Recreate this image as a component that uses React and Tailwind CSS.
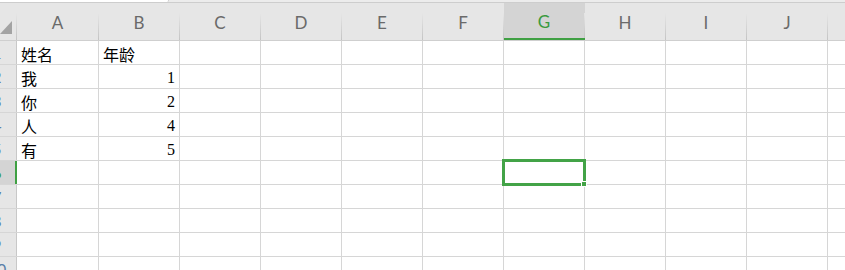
import React from "react";

const COLS = ["A", "B", "C", "D", "E", "F", "G", "H", "I", "J"];
const ROWS = [
  { name: "姓名", age: "年龄", header: true },
  { name: "我", age: "1" },
  { name: "你", age: "2" },
  { name: "人", age: "4" },
  { name: "有", age: "5" },
  {},
  {},
  {},
  {},
  {},
];
const SELECTED_COL = "G";
const SELECTED_ROW = 6;

function ColHeader({ label, first }) {
  const selected = label === SELECTED_COL;
  return (
    <div
      className={`flex h-full ${first ? "w-[82px]" : "w-[81px]"} ${selected ? "bg-[#d4d4d4] border-b-2 border-[#3fa043]" : ""}`}
    >
      <div
        className={`flex flex-1 items-center justify-center pt-[2px] text-[17px] ${selected ? "text-[#3a9a3e]" : "text-[#6a6a6a]"}`}
      >
        {label}
      </div>
      <div className="mt-[10px] w-px self-stretch bg-gradient-to-b from-[#e6e6e6] to-[#c4c4c4]" />
    </div>
  );
}

function RowHeader({ n }) {
  const selected = n === SELECTED_ROW;
  return (
    <div
      className={`h-full w-[17px] shrink-0 overflow-hidden ${selected ? "bg-[#d4d4d4] border-r-2 border-[#3fa043]" : "bg-[#e6e6e6] border-r border-[#c8c8c8]"}`}
    >
      <div
        className={`-ml-[23px] flex h-full w-[40px] items-center justify-center text-[16px] ${selected ? "text-[#3a9a3e]" : "text-[#5a7fa8]"}`}
      >
        {n}
      </div>
    </div>
  );
}

function CornerCell() {
  return (
    <div className="flex h-[37px] w-[17px] shrink-0 items-end">
      <svg width="12" height="13" viewBox="0 0 12 13" className="mb-[6px] shrink-0">
        <path d="M12 0 L12 13 L0 13 Z" fill="#a3a3a3" />
      </svg>
      <div className="ml-auto h-[27px] w-px bg-gradient-to-b from-[#e6e6e6] to-[#c4c4c4]" />
    </div>
  );
}

export default function App() {
  return (
    <div className="relative h-[270px] w-[845px] overflow-hidden bg-white font-['Lato','Noto_Sans_CJK_SC',sans-serif]">
      {/* top strip */}
      <div className="flex h-[3px] border-b border-[#cdcdcd] bg-[#ececec]">
        <div className="h-[2px] w-[169px] rounded-br-[4px] border-r border-[#cdcdcd] bg-white" />
      </div>

      {/* column headers */}
      <div className="flex h-[38px] border-b border-[#cfcfcf] bg-[#e6e6e6]">
        <CornerCell />
        {COLS.map((c, i) => (
          <ColHeader key={c} label={c} first={i === 0} />
        ))}
        <div className="flex-1" />
      </div>

      {/* rows */}
      {ROWS.map((r, i) => (
        <div key={i} className="flex h-[24px] border-b border-[#d6d6d6]">
          <RowHeader n={i + 1} />
          <div className="flex h-full w-[82px] items-center border-r border-[#d6d6d6] pl-[4px] pt-[2px] font-['Noto_Sans_CJK_SC',sans-serif] text-[16px] text-black">
            {r.name}
          </div>
          <div
            className={`flex h-full w-[81px] items-center border-r border-[#d6d6d6] pt-[2px] text-black ${r.header ? "pl-[4px] font-['Noto_Sans_CJK_SC',sans-serif] text-[16px]" : "justify-end pr-[4px] font-['Liberation_Serif',serif] text-[16px]"}`}
          >
            {r.age}
          </div>
          {COLS.slice(2).map((c) => (
            <div key={c} className="h-full w-[81px] border-r border-[#d6d6d6]" />
          ))}
          <div className="flex-1" />
        </div>
      ))}

      {/* active cell G6 */}
      <div className="absolute left-[502px] top-[159px] h-[27px] w-[84px] border-[3px] border-[#43a347]">
        <div className="absolute -bottom-[4px] -right-[4px] h-[6px] w-[6px] border border-white bg-[#43a347]" />
      </div>
    </div>
  );
}
